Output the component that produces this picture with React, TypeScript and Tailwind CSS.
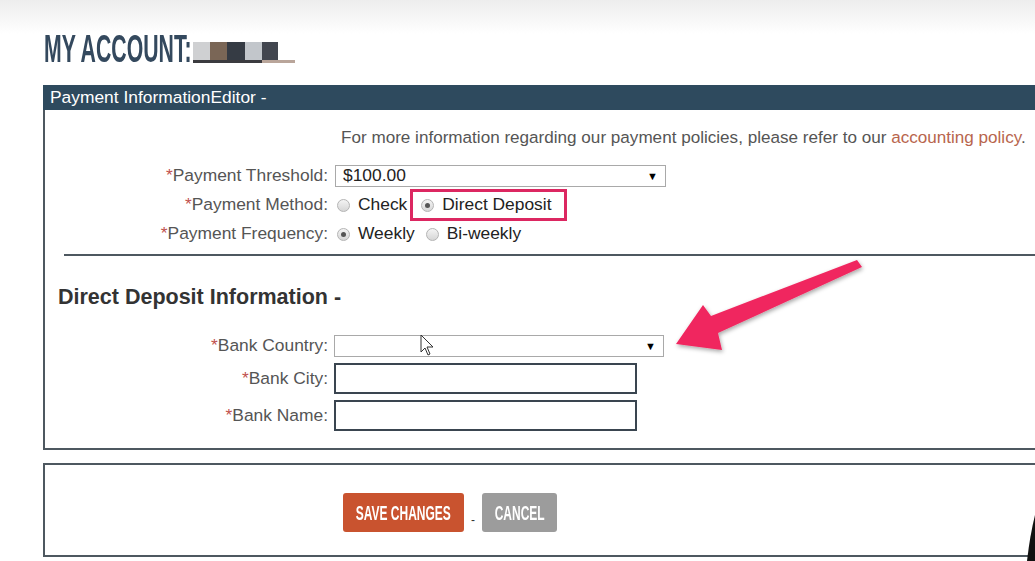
import type { ReactNode } from "react";

const FONT = { fontFamily: '"Liberation Sans", Arial, sans-serif' };

function Label({ children }: { children: ReactNode }) {
  return (
    <div className="text-right text-[17.4px] leading-none text-[#555]">
      <span className="text-[#c0504d]">*</span>
      {children}
    </div>
  );
}

function Select({ value, width }: { value?: string; width: string }) {
  return (
    <div className={`flex h-[22px] items-center justify-between border border-[#a9a9a9] bg-white pl-[7px] pr-[7px] ${width}`}>
      <span className="text-[17.4px] leading-none text-[#222]">{value}</span>
      <span className="text-[11px] leading-none text-black">▼</span>
    </div>
  );
}

function Radio({ checked, label }: { checked?: boolean; label: string }) {
  return (
    <span className="inline-flex items-center">
      <span className="mr-[8px] flex h-[13px] w-[13px] items-center justify-center rounded-full border border-[#b4b4b4] bg-gradient-to-b from-[#f4f4f4] to-[#d6d6d6]">
        {checked && <span className="h-[5px] w-[5px] rounded-full bg-[#555]" />}
      </span>
      <span className="text-[17.4px] leading-none text-[#222]">{label}</span>
    </span>
  );
}

function Input() {
  return <div className="h-[31px] w-[303px] border-2 border-[#3a4550] bg-white" />;
}

export default function App() {
  return (
    <div className="relative h-[561px] w-[1035px] overflow-hidden bg-white" style={FONT}>
      <div className="bg-gradient-to-b from-[#ededed] via-white to-white pt-[29px]">
        <div className="ml-[44px] flex items-end">
          <span className="inline-block h-[39px] w-[147px] overflow-visible">
            <span className="inline-block origin-left scale-x-[0.545] whitespace-nowrap text-[39px] font-bold leading-none text-[#34495e]">
              MY ACCOUNT:
            </span>
          </span>
          {/* blurred user name */}
          <div className="mb-[5px] ml-[2px] flex flex-col">
            <div className="flex h-[18px]">
              <div className="w-[17px] bg-[#cfd0d2]" />
              <div className="w-[17px] bg-[#7a6656]" />
              <div className="w-[18px] bg-[#353b44]" />
              <div className="w-[17px] bg-[#c2c6cb]" />
              <div className="w-[16px] bg-[#42464f]" />
              <div className="w-[17px] bg-white" />
            </div>
            <div className="flex h-[3px]">
              <div className="w-[69px] bg-[#3b3b3f]" />
              <div className="w-[33px] bg-[#b9a59a]" />
            </div>
          </div>
        </div>
      </div>

      <div className="ml-[43px] mt-[17px] w-[1010px]">
        <div className="flex h-[25px] items-center bg-[#2e4a5e] pl-[7px] text-[17.4px] leading-none text-white">
          Payment InformationEditor -
        </div>
        <div className="border-2 border-t-0 border-[#4e5860] pb-[17px]">
          <p className="whitespace-nowrap pl-[296px] pt-[18px] text-[17.1px] leading-[20px] text-[#555]">
            For more information regarding our payment policies, please refer to our{" "}
            <span className="text-[#b8654d]">accounting policy</span>.
          </p>

          <div className="mt-[17px] grid grid-cols-[283px_1fr] items-center gap-x-[7px]">
            <div className="flex h-[22px] items-center justify-end">
              <Label>Payment Threshold:</Label>
            </div>
            <Select value="$100.00" width="w-[331px]" />

            <div className="mt-[2px] flex h-[32px] items-center justify-end">
              <Label>Payment Method:</Label>
            </div>
            <div className="mt-[2px] flex h-[32px] items-center pl-[2px]">
              <Radio label="Check" />
              <span className="ml-[3px] inline-flex h-[32px] items-center border-[3px] border-[#dc2761] pl-[8px] pr-[12px]">
                <Radio checked label="Direct Deposit" />
              </span>
            </div>

            <div className="flex h-[26px] items-center justify-end">
              <Label>Payment Frequency:</Label>
            </div>
            <div className="flex h-[26px] items-center gap-[11px] pl-[2px]">
              <Radio checked label="Weekly" />
              <Radio label="Bi-weekly" />
            </div>
          </div>

          <div className="ml-[19px] mt-[7px] h-[2px] bg-[#4e5860]" />

          <h3 className="ml-[13px] mt-[29px] text-[21.5px] font-bold leading-[24px] text-[#333]">
            Direct Deposit Information -
          </h3>

          <div className="mt-[26px] grid grid-cols-[283px_1fr] items-center gap-x-[6px] gap-y-[6px]">
            <div className="flex h-[22px] items-center justify-end">
              <Label>Bank Country:</Label>
            </div>
            <Select width="w-[330px]" />

            <div className="flex h-[31px] items-center justify-end">
              <Label>Bank City:</Label>
            </div>
            <Input />

            <div className="flex h-[31px] items-center justify-end">
              <Label>Bank Name:</Label>
            </div>
            <Input />
          </div>
        </div>

        <div className="mt-[13px] flex items-center border-2 border-[#4e5860] pb-[23px] pl-[298px] pt-[28px]">
          <button className="flex h-[39px] w-[121px] items-center justify-center rounded-[3px] bg-[#c9532f]">
            <span className="inline-block scale-x-[0.6] whitespace-nowrap text-[20px] font-bold leading-none text-white">
              SAVE CHANGES
            </span>
          </button>
          <span className="mx-[7px] mt-[14px] text-[12px] leading-none text-[#333]">-</span>
          <button className="flex h-[39px] w-[75px] items-center justify-center rounded-[3px] bg-[#9c9c9c]">
            <span className="inline-block scale-x-[0.6] whitespace-nowrap text-[20px] font-bold leading-none text-white">
              CANCEL
            </span>
          </button>
        </div>
      </div>

      {/* annotation arrow */}
      <svg className="pointer-events-none absolute left-0 top-0" width="1035" height="561">
        <defs>
          <filter id="sh" x="-20%" y="-20%" width="140%" height="140%">
            <feDropShadow dx="1" dy="2" stdDeviation="2" floodColor="#000" floodOpacity="0.35" />
          </filter>
        </defs>
        <polygon
          points="676,344 703,305 711,316 857,260 862,267 718,333 722,350"
          fill="#f0285f"
          filter="url(#sh)"
        />
        {/* cursor */}
        <path d="M421 335 L421 352 L425 348 L428 355 L430 354 L427 347 L433 347 Z" fill="#fff" stroke="#333" strokeWidth="1" />
        {/* dark edge bottom right */}
        <path d="M1035 515 Q1030 535 1027 561 L1035 561 Z" fill="#111" />
      </svg>
    </div>
  );
}
